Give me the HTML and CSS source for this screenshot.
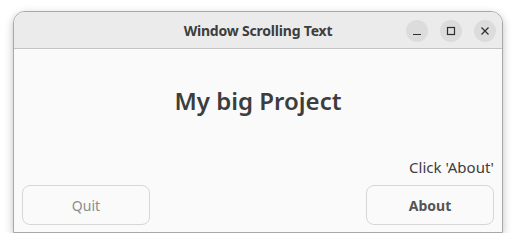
FILE: index.html
```html
<!DOCTYPE html>
<html lang="en">
<head>
    <meta charset="UTF-8">
    <title>Window Scrolling Text</title>
    <link rel="stylesheet" href="styles.css">
</head>
<body>
<div id="window">
    <div id="titlebar">
        <span id="title">Window Scrolling Text</span>
        <span id="controls">
            <span class="ctl">
                <svg width="10" height="10" viewBox="0 0 10 10"><path d="M1 8.5h8" stroke="#2e2e2e" stroke-width="1.2"/></svg>
            </span>
            <span class="ctl">
                <svg width="10" height="10" viewBox="0 0 10 10"><rect x="1.5" y="1.5" width="7" height="7" fill="none" stroke="#2e2e2e" stroke-width="1.2"/></svg>
            </span>
            <span class="ctl">
                <svg width="10" height="10" viewBox="0 0 10 10"><path d="M1.5 1.5l7 7M8.5 1.5l-7 7" stroke="#2e2e2e" stroke-width="1.2"/></svg>
            </span>
        </span>
    </div>
    <div id="content">
        <div id="heading_area">
            <h1 class="heading">My big Project</h1>
        </div>
        <div class="hint">Click 'About'</div>
        <div class="buttons">
            <button class="btn quit">Quit</button>
            <button class="btn about">About</button>
        </div>
    </div>
</div>
</body>
</html>
```

FILE: styles.css
```css
body {
    margin: 0;
    padding: 11px 0 0 13px;
    background-color: #ffffff;
    font-family: "Noto Sans", "Open Sans", sans-serif;
    color: #3d3d3d;
}

#window {
    width: 488px;
    height: 220px;
    display: flex;
    flex-direction: column;
    border: 1px solid #a8a8a8;
    border-radius: 12px 12px 0 0;
    background-color: #fafafa;
    box-shadow: 0 3px 8px rgba(0, 0, 0, 0.25);
    overflow: hidden;
}

#titlebar {
    position: relative;
    height: 36px;
    flex: none;
    display: flex;
    align-items: center;
    justify-content: center;
    background-color: #ebebeb;
    border-bottom: 1px solid #c4c4c4;
}

#title {
    font-size: 14px;
    font-weight: bold;
    color: #3d3d3d;
    letter-spacing: -0.2px;
}

#controls {
    position: absolute;
    right: 6px;
    top: 8px;
    display: flex;
    gap: 12px;
}

.ctl {
    width: 22px;
    height: 22px;
    border-radius: 50%;
    background-color: #dcdcdc;
    display: flex;
    align-items: center;
    justify-content: center;
}

#content {
    flex: 1;
    display: flex;
    flex-direction: column;
    padding: 0 8px 7px 8px;
}

#heading_area {
    flex: 1;
    display: flex;
    align-items: center;
    justify-content: center;
    padding-bottom: 6px;
}

.heading {
    margin: 0;
    font-size: 24px;
    font-weight: 600;
    color: #3d3d3d;
}

.hint {
    text-align: right;
    font-size: 15px;
    color: #3d3d3d;
    margin-bottom: 8px;
}

.buttons {
    display: flex;
    justify-content: space-between;
}

.btn {
    width: 128px;
    height: 40px;
    border: 1px solid #d6d6d6;
    border-radius: 8px;
    background-color: #fafafa;
    font-family: "Noto Sans", "Open Sans", sans-serif;
    font-size: 14px;
}

.quit {
    color: #8c8c8c;
}

.about {
    font-weight: bold;
    color: #555555;
}
```
